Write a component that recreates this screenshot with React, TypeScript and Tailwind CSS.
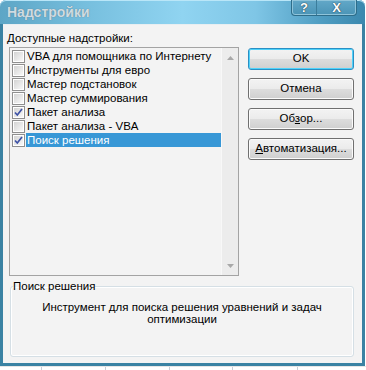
import React from 'react';

const items = [
  { label: 'VBA для помощника по Интернету', checked: false },
  { label: 'Инструменты для евро', checked: false },
  { label: 'Мастер подстановок', checked: false },
  { label: 'Мастер суммирования', checked: false },
  { label: 'Пакет анализа', checked: true },
  { label: 'Пакет анализа - VBA', checked: false },
  { label: 'Поиск решения', checked: true },
];

const CheckBox: React.FC<{ checked: boolean }> = ({ checked }) => (
  <span className="w-[13px] h-[13px] border border-[#8f8f8f] bg-white p-px shrink-0 flex">
    <span className="flex-1 bg-gradient-to-br from-[#d4d4d4] to-[#f8f8f8] flex items-center justify-center">
      {checked && (
        <svg width="9" height="9" viewBox="0 0 9 9">
          <path d="M1 4.5 L3.3 7 L8 1" fill="none" stroke="#3e52a6" strokeWidth="1.7" />
        </svg>
      )}
    </span>
  </span>
);

const DlgButton: React.FC<{ focused?: boolean; children: React.ReactNode }> = ({ focused, children }) => (
  <button
    className={
      focused
        ? 'h-[22px] w-[106px] rounded-[3px] border border-[#2a8fc4] shadow-[inset_0_0_0_1px_#4fd2fa] bg-[linear-gradient(#f3f3f3_0%,#ebebeb_50%,#dddddd_50%,#cfcfcf_100%)] text-[11.5px] text-black leading-none'
        : 'h-[22px] w-[106px] rounded-[3px] border border-[#707070] shadow-[inset_0_0_0_1px_#fbfbfb] bg-[linear-gradient(#f3f3f3_0%,#ebebeb_50%,#dddddd_50%,#cfcfcf_100%)] text-[11.5px] text-black leading-none'
    }
  >
    {children}
  </button>
);

export default function App() {
  return (
    <div className="w-[366px] h-[370px] bg-white overflow-hidden font-['Liberation_Sans',Arial,sans-serif] text-black">
      <div className="flex">
        <div className="w-[365px] h-[366px] flex flex-col bg-[#3a82a3] rounded-t-[6px]">
          {/* title bar */}
          <div className="h-[24px] flex items-start justify-between rounded-t-[6px] bg-[linear-gradient(90deg,#5da6c6_0%,#78c0df_25%,#90d4f1_50%,#7fc6e6_70%,#4f9dc2_88%,#3b88ae_100%)] shadow-[inset_0_1px_0_#b9e6f8]">
            <span className="ml-[7px] mt-[5px] text-[14px] font-bold text-[#cfdbe2] leading-[15px] [text-shadow:0_0_1px_#55707e]">
              Надстройки
            </span>
            <div className="mr-[8px] flex h-[16px] border border-t-0 border-[#2e6d8a] rounded-b-[4px] shadow-[inset_0_0_0_1px_#8fc4da] bg-[linear-gradient(#62a8c8,#4b94b6)]">
              <span className="w-[25px] flex items-center justify-center border-r border-[#3c7d9b] text-[13px] font-bold text-white leading-none [text-shadow:0_0_1px_#1e3a48,0_0_1px_#1e3a48]">
                ?
              </span>
              <span className="w-[39px] flex items-center justify-center text-[13px] font-bold text-white leading-none [text-shadow:0_0_1px_#1e3a48,0_0_1px_#1e3a48]">
                X
              </span>
            </div>
          </div>
          {/* body */}
          <div className="flex-1 mx-[3px] mb-[3px] bg-[#f3f3f3] border-t border-[#e8eef1] flex flex-col text-[11.5px]">
            <div className="ml-[4px] mt-[6px] h-[14px] leading-[14px]">
              <span className="underline">Д</span>оступные надстройки:
            </div>
            <div className="flex mt-[2px]">
              <div className="ml-[6px] w-[230px] h-[229px] border border-[#a3a3a3] flex">
                <div className="flex-1 flex flex-col pt-px">
                  {items.map((it, i) => (
                    <div key={it.label} className="h-[14px] flex items-center pl-[2px]">
                      <CheckBox checked={it.checked} />
                      <span
                        className={
                          i === 6
                            ? 'flex-1 h-[14px] ml-px pl-px leading-[14px] bg-[#3797d6] text-white'
                            : 'flex-1 h-[14px] ml-px pl-px leading-[14px]'
                        }
                      >
                        {it.label}
                      </span>
                    </div>
                  ))}
                </div>
                <div className="w-[17px] bg-[#ececec] border-l border-[#f8f8f8] flex flex-col items-center justify-between pt-[8px] pb-[7px]">
                  <svg width="7" height="4" viewBox="0 0 7 4">
                    <path d="M0 4 L3.5 0 L7 4 Z" fill="#a8a8a8" />
                  </svg>
                  <svg width="7" height="4" viewBox="0 0 7 4">
                    <path d="M0 0 L7 0 L3.5 4 Z" fill="#a8a8a8" />
                  </svg>
                </div>
              </div>
              <div className="ml-[9px] mt-px flex flex-col gap-[8px]">
                <DlgButton focused>OK</DlgButton>
                <DlgButton>Отмена</DlgButton>
                <DlgButton>
                  Об<span className="underline">з</span>ор...
                </DlgButton>
                <DlgButton>
                  <span className="underline">А</span>втоматизация...
                </DlgButton>
              </div>
            </div>
            <fieldset className="ml-[7px] mt-[3px] w-[344px] h-[78px] border border-[#d5dfe5] rounded-[3px] shadow-[inset_0_0_0_1px_#ffffff]">
              <legend className="ml-[2px] h-[14px] leading-[14px] px-0">Поиск решения</legend>
              <p className="pt-[8px] text-center leading-[12px]">
                Инструмент для поиска решения уравнений и задач
                <br />
                оптимизации
              </p>
            </fieldset>
          </div>
        </div>
      </div>
      {/* worksheet strip below */}
      <div className="h-[4px] flex border-t border-[#e6e6e6]">
        <div className="w-[42px] border-r border-[#c9cfd8]" />
        <div className="w-[64px] border-r border-[#c9cfd8]" />
        <div className="w-[64px] border-r border-[#c9cfd8]" />
        <div className="w-[63px] border-r border-[#c9cfd8]" />
        <div className="w-[65px] border-r border-[#c9cfd8]" />
      </div>
    </div>
  );
}
